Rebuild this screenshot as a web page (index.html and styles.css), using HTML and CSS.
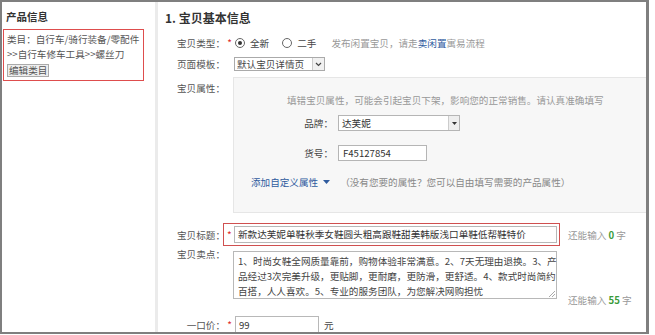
FILE: index.html
```html
<!DOCTYPE html>
<html lang="zh-CN">
<head>
<meta charset="utf-8">
<title>宝贝基本信息</title>
<link rel="stylesheet" href="styles.css">
</head>
<body>
<div class="frame">
  <aside class="side">
    <div class="side-title">产品信息</div>
    <div class="cat">
      <div class="cat-line">类目：自行车/骑行装备/零配件</div>
      <div class="cat-line">&gt;&gt;自行车修车工具&gt;&gt;螺丝刀</div>
      <div class="cat-line"><span class="btn">编辑类目</span></div>
    </div>
  </aside>
  <div class="sep"></div>
  <main class="main">
    <h2 class="sec-title">1. 宝贝基本信息</h2>

    <div class="row r-type">
      <span class="lbl">宝贝类型：</span><span class="req">*</span>
      <span class="radio on"></span><span class="opt">全新</span>
      <span class="radio r2"></span><span class="opt">二手</span>
      <span class="tip">发布闲置宝贝，请走<span class="link">卖闲置</span>寓易流程</span>
    </div>

    <div class="row r-tpl">
      <span class="lbl">页面模板：</span><span class="req"></span>
      <span class="select">
        <span class="sel-text">默认宝贝详情页</span>
        <span class="sel-btn"><svg width="7" height="5" viewBox="0 0 7 5"><polyline points="1,1 3.5,3.5 6,1" fill="none" stroke="#444" stroke-width="1.2"/></svg></span>
      </span>
    </div>

    <div class="row r-attr">
      <span class="lbl lbl-top">宝贝属性：</span><span class="req"></span>
      <div class="attr-box">
        <div class="attr-hint">填错宝贝属性，可能会引起宝贝下架，影响您的正常销售。请认真准确填写</div>
        <div class="attr-row a-brand">
          <span class="a-lbl">品牌：</span>
          <span class="a-select">
            <span class="a-text">达芙妮</span>
            <span class="a-btn"><svg width="5" height="3" viewBox="0 0 5 3"><polygon points="0,0 5,0 2.5,3" fill="#333"/></svg></span>
          </span>
        </div>
        <div class="attr-row a-sku">
          <span class="a-lbl">货号：</span>
          <span class="a-input">F45127854</span>
        </div>
        <div class="add-attr">
          <span class="link">添加自定义属性</span>
          <svg class="tri" width="7" height="4" viewBox="0 0 7 4"><polygon points="0,0 7,0 3.5,4" fill="#2f5b9e"/></svg>
          <span class="add-tip">（没有您要的属性？您可以自由填写需要的产品属性）</span>
        </div>
      </div>
    </div>

    <div class="row r-title">
      <span class="lbl">宝贝标题：</span>
      <div class="title-box">
        <span class="req2">*</span>
        <span class="t-input">新款达芙妮单鞋秋季女鞋圆头粗高跟鞋甜美韩版浅口单鞋低帮鞋特价</span>
      </div>
      <span class="count">还能输入 <b class="num">0</b> 字</span>
    </div>

    <div class="row r-sell">
      <span class="lbl lbl-sell">宝贝卖点：</span><span class="req"></span>
      <div class="textarea">
        <div class="ta-line">1、时尚女鞋全网质量靠前，购物体验非常满意。2、7天无理由退换。3、产</div>
        <div class="ta-line">品经过3次完美升级，更贴脚，更耐磨，更防滑，更舒适。4、款式时尚简约</div>
        <div class="ta-line">百搭，人人喜欢。5、专业的服务团队，为您解决网购担忧</div>
        <svg class="grip" width="7" height="7" viewBox="0 0 7 7"><line x1="1" y1="7" x2="7" y2="1" stroke="#aaa"/><line x1="4" y1="7" x2="7" y2="4" stroke="#aaa"/></svg>
      </div>
      <span class="count count-sell">还能输入 <b class="num">55</b> 字</span>
    </div>

    <div class="row r-price">
      <span class="lbl">一口价：</span><span class="req">*</span>
      <span class="p-input">99</span>
      <span class="unit">元</span>
    </div>
  </main>
</div>
</body>
</html>
```

FILE: styles.css
```css
html, body {
  margin: 0;
  padding: 0;
  background: #fff;
}
body {
  font-family: "Noto Sans CJK SC", "Noto Sans", sans-serif;
  font-size: 9.6px;
  color: #444;
  line-height: 14px;
}
.frame {
  width: 649px;
  height: 334px;
  box-sizing: border-box;
  border: 2px solid #7f7f7f;
  border-right-width: 3px;
  display: flex;
  overflow: hidden;
  background: #fff;
}
.side {
  width: 153px;
  flex: none;
}
.side-title {
  margin: 8px 0 0 4px;
  font-size: 10.5px;
  font-weight: bold;
  line-height: 14px;
  color: #333;
}
.cat {
  margin: 5px 0 0 1px;
  width: 141px;
  box-sizing: border-box;
  border: 1px solid #de4d4d;
  padding: 2px 2px 3px 3px;
  color: #555;
}
.cat-line {
  line-height: 15px;
  white-space: nowrap;
}
.btn {
  display: inline-block;
  border: 1px solid #aaa;
  background: #eee;
  line-height: 11px;
  padding: 0 1px;
  vertical-align: middle;
}
.sep {
  width: 3px;
  flex: none;
  background: #ebebeb;
}
.main {
  flex: 1;
  min-width: 0;
}
.sec-title {
  margin: 8px 0 0 7px;
  font-size: 12px;
  font-weight: bold;
  line-height: 16px;
  color: #333;
}
.row {
  display: flex;
  align-items: center;
}
.lbl {
  width: 67px;
  flex: none;
  text-align: right;
  white-space: nowrap;
  color: #555;
}
.req {
  width: 9px;
  flex: none;
  text-align: center;
  color: #e02a2a;
  font-size: 10px;
}
.r-type {
  margin-top: 9px;
  height: 16px;
}
.radio {
  width: 8px;
  height: 8px;
  border: 1px solid #666;
  border-radius: 50%;
  margin-left: 1px;
  flex: none;
  display: flex;
  align-items: center;
  justify-content: center;
  background: #fff;
}
.radio.on::after {
  content: "";
  width: 4px;
  height: 4px;
  border-radius: 50%;
  background: #333;
}
.radio.r2 {
  margin-left: 13px;
}
.opt {
  margin-left: 5px;
  color: #444;
}
.tip {
  margin-left: 15px;
  color: #999;
  white-space: nowrap;
}
.link {
  color: #2f5b9e;
}
.r-tpl {
  margin-top: 6px;
  height: 14px;
}
.select {
  display: flex;
  width: 91px;
  height: 14px;
  box-sizing: border-box;
  border: 1px solid #aaa;
  background: #fff;
}
.sel-text {
  flex: 1;
  padding-left: 2px;
  line-height: 12px;
  color: #444;
  white-space: nowrap;
}
.sel-btn {
  width: 11px;
  border-left: 1px solid #ccc;
  background: #f1f1f1;
  display: flex;
  align-items: center;
  justify-content: center;
}
.r-attr {
  margin-top: 6px;
  align-items: flex-start;
}
.lbl-top {
  padding-top: 4px;
}
.attr-box {
  flex: 1;
  margin-left: -1px;
  height: 136px;
  box-sizing: border-box;
  border: 1px solid #e6e6e6;
  border-right: 0;
  background: #f7f7f7;
  padding: 15px 0 0 0;
}
.attr-hint {
  padding-left: 53px;
  color: #999;
  white-space: nowrap;
}
.attr-row {
  display: flex;
  align-items: center;
  height: 16px;
}
.a-brand {
  margin-top: 8px;
}
.a-sku {
  margin-top: 14px;
}
.a-lbl {
  width: 99px;
  text-align: right;
  color: #444;
  flex: none;
}
.a-select {
  margin-left: 5px;
  display: flex;
  width: 122px;
  height: 16px;
  box-sizing: border-box;
  border: 1px solid #b5b5b5;
  background: #fff;
}
.a-text {
  flex: 1;
  padding-left: 3px;
  line-height: 14px;
  color: #333;
}
.a-btn {
  width: 10px;
  border-left: 1px solid #ccc;
  background: #eee;
  display: flex;
  align-items: center;
  justify-content: center;
}
.a-input {
  margin-left: 5px;
  width: 89px;
  height: 16px;
  box-sizing: border-box;
  border: 1px solid #b5b5b5;
  background: #fff;
  padding-left: 4px;
  line-height: 14px;
  color: #333;
}
.add-attr {
  margin-top: 14px;
  padding-left: 17px;
  display: flex;
  align-items: center;
  white-space: nowrap;
}
.tri {
  margin-left: 5px;
}
.add-tip {
  margin-left: 10px;
  color: #888;
}
.r-title {
  margin-top: 10px;
}
.title-box {
  margin-left: -2px;
  display: flex;
  align-items: center;
  border: 1px solid #d05050;
  padding: 2px 2px 2px 3px;
}
.req2 {
  width: 7px;
  color: #e02a2a;
  font-size: 10px;
  text-align: left;
}
.t-input {
  width: 323px;
  height: 17px;
  box-sizing: border-box;
  border: 1px solid #b8b8b8;
  background: #fff;
  padding-left: 3px;
  line-height: 15px;
  color: #333;
  white-space: nowrap;
  overflow: hidden;
}
.count {
  margin-left: 8px;
  color: #999;
  white-space: nowrap;
}
.num {
  color: #3a9a3a;
  font-weight: bold;
}
.r-sell {
  margin-top: 5px;
  align-items: flex-start;
}
.lbl-sell {
  margin-top: -4px;
}
.textarea {
  position: relative;
  width: 324px;
  height: 48px;
  box-sizing: border-box;
  margin-left: -1px;
  border: 1px solid #b8b8b8;
  background: #fff;
  padding: 2px 0 0 4px;
  color: #444;
}
.ta-line {
  line-height: 15px;
  white-space: nowrap;
}
.grip {
  position: absolute;
  right: 1px;
  bottom: 1px;
}
.count-sell {
  align-self: flex-end;
  margin-left: 11px;
  margin-bottom: -8px;
}
.r-price {
  margin-top: 17px;
}
.p-input {
  margin-left: 1px;
  width: 84px;
  height: 18px;
  box-sizing: border-box;
  border: 1px solid #b8b8b8;
  padding-left: 3px;
  line-height: 16px;
  color: #333;
}
.unit {
  margin-left: 5px;
  color: #444;
}
```
